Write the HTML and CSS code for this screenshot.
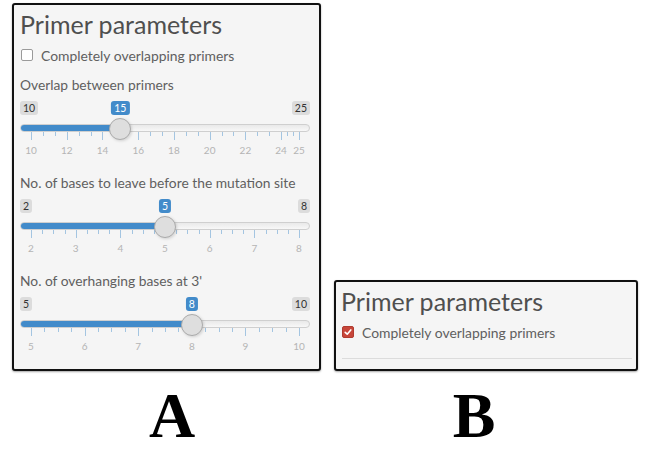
FILE: index.html
```html
<!DOCTYPE html>
<html lang="en">

<head>
    <meta charset="UTF-8">
    <meta name="viewport" content="width=device-width, initial-scale=1.0">
    <title>Primer parameters</title>
    <link rel="stylesheet" href="styles.css">
</head>

<body>
    <div class="figure">
        <div class="well well-a">
            <h3 class="well-title">Primer parameters</h3>
            <label class="check"><span class="box"></span>Completely overlapping primers</label>
            <div class="field">
                <label class="field-label">Overlap between primers</label>
                <div class="irs" data-min="10" data-max="25" data-value="15"
                    data-marks="10,12,14,16,18,20,22,24,25" data-sub="3"></div>
            </div>
            <div class="field">
                <label class="field-label">No. of bases to leave before the mutation site</label>
                <div class="irs" data-min="2" data-max="8" data-value="5"
                    data-marks="2,3,4,5,6,7,8" data-sub="4"></div>
            </div>
            <div class="field">
                <label class="field-label">No. of overhanging bases at 3'</label>
                <div class="irs" data-min="5" data-max="10" data-value="8"
                    data-marks="5,6,7,8,9,10" data-sub="4"></div>
            </div>
        </div>

        <div class="well well-b">
            <h3 class="well-title">Primer parameters</h3>
            <label class="check"><span class="box checked">
                    <svg viewBox="0 0 12 12" width="12" height="12">
                        <path d="M3.2 6.3 L5.2 8.2 L8.8 3.9" fill="none" stroke="#fff" stroke-width="1.6"
                            stroke-linecap="round" stroke-linejoin="round" />
                    </svg>
                </span>Completely overlapping primers</label>
            <hr class="rule">
        </div>
    </div>

    <div class="captions">
        <span class="cap-a">A</span>
        <span class="cap-b">B</span>
    </div>

    <script>
        // build each range slider: min/max badges, track, handle and grid
        document.querySelectorAll('.irs').forEach(function (el) {
            let min = +el.dataset.min, max = +el.dataset.max, val = +el.dataset.value;
            let marks = el.dataset.marks.split(',').map(Number);
            let sub = +el.dataset.sub;
            let frac = function (v) { return (v - min) / (max - min); };
            let pct = function (v) { return (frac(v) * 100).toFixed(3) + '%'; };

            let grid = '';
            marks.forEach(function (m, i) {
                grid += '<span class="pol big" style="left:' + pct(m) + '"></span>';
                grid += '<span class="grid-text" style="left:' + pct(m) + '">' + m + '</span>';
                if (i < marks.length - 1) {
                    let step = (marks[i + 1] - m) / sub;
                    for (let k = 1; k < sub; k++) {
                        grid += '<span class="pol" style="left:' + pct(m + step * k) + '"></span>';
                    }
                }
            });

            el.innerHTML = `
                <div class="irs-head">
                    <span class="irs-min">${min}</span>
                    <span class="irs-max">${max}</span>
                </div>
                <div class="irs-line">
                    <span class="irs-bar" style="width:calc(11px + ${frac(val).toFixed(4)} * (100% - 22px))"></span>
                </div>
                <div class="irs-grid">${grid}</div>
                <div class="irs-knobs">
                    <span class="irs-single" style="left:${pct(val)}">${val}</span>
                    <span class="irs-handle" style="left:${pct(val)}"></span>
                </div>
            `;
        });
    </script>
</body>

</html>
```

FILE: styles.css
```css
* {
    margin: 0;
    padding: 0;
    box-sizing: border-box;
}

body {
    width: 650px;
    height: 450px;
    overflow: hidden;
    background: #fff;
    font-family: Lato, "Open Sans", sans-serif;
}

.figure {
    display: flex;
    align-items: flex-end;
    gap: 13px;
    padding: 3px 0 0 12px;
}

.well {
    background-color: #f5f5f5;
    border: 2px solid #111;
    border-radius: 3px;
    box-shadow: 0 1px 2px rgba(0, 0, 0, 0.35);
    color: #555;
}

.well-a {
    width: 309px;
    height: 368px;
    padding: 0 9px 0 6px;
}

.well-b {
    width: 304px;
    height: 91px;
    padding: 0 4px 0 5px;
}

.well-title {
    font-size: 25px;
    font-weight: 400;
    line-height: 29px;
    margin-top: 5px;
    color: #4f4f4f;
}

.check {
    display: flex;
    align-items: center;
    gap: 8px;
    height: 18px;
    margin-top: 7px;
    padding-left: 1px;
    font-size: 13.9px;
    color: #606060;
}

.box {
    display: inline-flex;
    width: 12px;
    height: 12px;
    background: #fff;
    border: 1px solid #9a9a9a;
    border-radius: 2px;
}

.box.checked {
    background: #c7463a;
    border-color: #b03b30;
}

.box svg {
    margin: -1px;
}

.rule {
    border: none;
    border-top: 1px solid #dcdcdc;
    margin: 17px 0 0 1px;
}

.field {
    margin-top: 20px;
}

.check+.field {
    margin-top: 12px;
}

.field-label {
    display: block;
    font-size: 13.8px;
    line-height: 18px;
    color: #606060;
}

/* range slider */
.irs {
    position: relative;
    height: 53px;
    margin-top: 7px;
}

.irs-head {
    display: flex;
    justify-content: space-between;
    height: 14px;
}

.irs-min,
.irs-max,
.irs-single {
    font-size: 10.5px;
    line-height: 12px;
    padding: 1px 3px;
    border-radius: 3px;
}

.irs-min,
.irs-max {
    color: #333;
    background: rgba(0, 0, 0, 0.1);
}

.irs-line {
    height: 8px;
    margin-top: 9px;
    border: 1px solid #cfcfcf;
    border-radius: 8px;
    background: linear-gradient(to bottom, #e2e2e2 -50%, #fff 150%);
    overflow: hidden;
}

.irs-bar {
    display: block;
    margin: -1px 0 0 -1px;
    height: 8px;
    background: #428bca;
}

.irs-grid {
    position: relative;
    height: 22px;
    margin: 0 11px;
}

.pol {
    position: absolute;
    top: 0;
    width: 1px;
    height: 4px;
    background: #428bca;
    opacity: 0.45;
}

.pol.big {
    height: 8px;
}

.grid-text {
    position: absolute;
    top: 12px;
    font-size: 10px;
    line-height: 12px;
    color: #b4b4b4;
    transform: translateX(-50%);
}

.irs-knobs {
    position: absolute;
    top: 0;
    bottom: 0;
    left: 11px;
    right: 11px;
}

.irs-single {
    position: absolute;
    top: 0;
    color: #fff;
    background: #428bca;
    transform: translateX(-50%);
}

.irs-handle {
    position: absolute;
    top: 17px;
    width: 22px;
    height: 22px;
    margin-left: -11px;
    border-radius: 50%;
    background: #dedede;
    border: 1px solid #ababab;
    box-shadow: 1px 1px 3px rgba(0, 0, 0, 0.15);
}

.captions {
    display: flex;
    margin-top: 13px;
    font-family: "Liberation Serif", "Times New Roman", serif;
    font-weight: bold;
    font-size: 64px;
    line-height: 1;
}

.cap-a {
    width: 344px;
    text-align: center;
}

.cap-b {
    width: 260px;
    text-align: center;
}
```
